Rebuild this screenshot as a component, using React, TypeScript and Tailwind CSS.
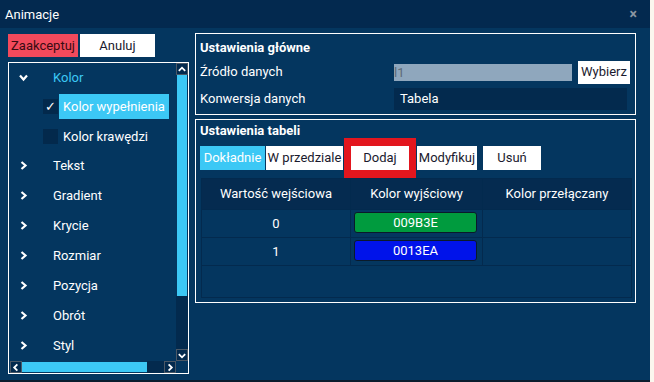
import React from "react";

const ChevronRight = () => (
  <svg width="8" height="9" viewBox="0 0 8 9" className="block">
    <path d="M1.5 1 L5.5 4.5 L1.5 8" stroke="white" strokeWidth="2.2" fill="none" />
  </svg>
);
const ChevronDown = () => (
  <svg width="9" height="8" viewBox="0 0 9 8" className="block">
    <path d="M1 1.5 L4.5 5.5 L8 1.5" stroke="white" strokeWidth="2.2" fill="none" />
  </svg>
);

const ScrollBtn = ({ dir }: { dir: "up" | "down" | "left" | "right" }) => {
  const d =
    dir === "up"
      ? "M2 7 L5.5 3.5 L9 7"
      : dir === "down"
      ? "M2 4 L5.5 7.5 L9 4"
      : dir === "left"
      ? "M7 2 L3.5 5.5 L7 9"
      : "M4 2 L7.5 5.5 L4 9";
  return (
    <div className="w-[12px] h-[12px] border border-[#4b5866] bg-[#032a4e] flex items-center justify-center">
      <svg width="11" height="11" viewBox="0 0 11 11">
        <path d={d} stroke="white" strokeWidth="2" fill="none" />
      </svg>
    </div>
  );
};

const treeItems = ["Tekst", "Gradient", "Krycie", "Rozmiar", "Pozycja", "Obrót", "Styl"];

export default function App() {
  return (
    <div
      className="w-[654px] h-[382px] bg-[#fbf6ee] overflow-hidden"
      style={{ fontFamily: "Roboto, 'Noto Sans', sans-serif" }}
    >
      <div className="w-[650px] h-[382px] bg-[#04365f] flex flex-col border-b-2 border-[#0b1d2e]">
        {/* title bar */}
        <div className="h-[28px] bg-[#03294f] flex items-center justify-between pl-[5px] pr-[13px]">
          <span className="text-white text-[13px] leading-none">Animacje</span>
          <span className="text-[#8a96a2] text-[14px] font-bold leading-none">×</span>
        </div>
        {/* body */}
        <div className="flex pl-[8px] pt-[5px]">
          {/* left column */}
          <div className="w-[181px] flex flex-col">
            <div className="flex gap-[2px] mt-[1px] h-[23px]">
              <div className="w-[70px] bg-[#f24a5c] text-[#3a0c12] text-[13px] flex items-center justify-center">
                Zaakceptuj
              </div>
              <div className="w-[75px] bg-white text-[#1a1a2e] text-[13px] flex items-center justify-center">
                Anuluj
              </div>
            </div>
            <div className="mt-[5px] h-[312px] border border-white flex flex-col">
              <div className="flex flex-1 min-h-0">
                <div className="flex-1 flex flex-col text-white text-[13px]">
                  {/* Kolor */}
                  <div className="h-[30px] flex items-center">
                    <div className="w-[44px] pl-[10px]">
                      <ChevronDown />
                    </div>
                    <span className="text-[#3cc8f5]">Kolor</span>
                  </div>
                  <div className="h-[30px] flex items-center pl-[34px]">
                    <div className="w-[15px] h-[15px] bg-[#03294c] flex items-center justify-center text-[13px] leading-none text-white">
                      ✓
                    </div>
                    <div className="ml-[1px] h-[25px] w-[110px] bg-[#3cc8f5] flex items-center pl-[4px] text-white">
                      Kolor wypełnienia
                    </div>
                  </div>
                  <div className="h-[30px] flex items-center pl-[34px]">
                    <div className="w-[15px] h-[15px] bg-[#03294c]" />
                    <span className="ml-[5px]">Kolor krawędzi</span>
                  </div>
                  {treeItems.map((t) => (
                    <div key={t} className="h-[30px] flex items-center shrink-0">
                      <div className="w-[44px] pl-[11px]">
                        <ChevronRight />
                      </div>
                      <span>{t}</span>
                    </div>
                  ))}
                </div>
                <div className="w-[12px] flex flex-col">
                  <ScrollBtn dir="up" />
                  <div className="h-[221px] bg-[#3cc8f5] mx-[1px]" />
                  <div className="flex-1 bg-[#032a4e]" />
                  <ScrollBtn dir="down" />
                </div>
              </div>
              <div className="h-[12px] flex ml-[1px]">
                <ScrollBtn dir="left" />
                <div className="w-[125px] bg-[#3cc8f5] my-[1px]" />
                <div className="flex-1 bg-[#032a4e]" />
                <ScrollBtn dir="right" />
                <div className="w-[12px]" />
              </div>
            </div>
          </div>
          {/* right column */}
          <div className="ml-[6px] w-[441px] flex flex-col">
            <div className="h-[82px] border border-white px-[4px] text-white text-[13px]">
              <div className="h-[26px] flex items-center font-bold pt-[2px]">Ustawienia główne</div>
              <div className="h-[24px] flex items-center">
                <span className="w-[194px]">Źródło danych</span>
                <div className="w-[178px] h-[17px] bg-[#8fa7bd] text-[#5d6b78] flex items-center pl-[0px] leading-none">
                  l1
                </div>
                <div className="ml-[6px] w-[52px] h-[23px] bg-white text-[#1a1a2e] flex items-center justify-center">
                  Wybierz
                </div>
              </div>
              <div className="h-[27px] flex items-center pt-[3px]">
                <span className="w-[194px]">Konwersja danych</span>
                <div className="w-[233px] h-[22px] bg-[#032a4e] flex items-center pl-[6px]">Tabela</div>
              </div>
            </div>
            <div className="mt-[4px] h-[184px] border border-white px-[4px] text-[13px]">
              <div className="h-[17px] flex items-end text-white font-bold leading-none">Ustawienia tabeli</div>
              <div className="flex items-center h-[41px]">
                <div className="w-[65px] h-[24px] bg-[#3cc8f5] text-white flex items-center justify-center">
                  Dokładnie
                </div>
                <div className="ml-[1px] w-[77px] h-[24px] bg-white text-[#1a1a2e] flex items-center justify-center">
                  W przedziale
                </div>
                <div className="ml-[1px] border-[7px] border-[#e3161e] border-y-[8px]">
                  <div className="w-[58px] h-[24px] bg-white text-[#1a1a2e] flex items-center justify-center">
                    Dodaj
                  </div>
                </div>
                <div className="ml-[1px] w-[60px] h-[24px] bg-white text-[#1a1a2e] flex items-center justify-center">
                  Modyfikuj
                </div>
                <div className="ml-[6px] w-[58px] h-[24px] bg-white text-[#1a1a2e] flex items-center justify-center">
                  Usuń
                </div>
              </div>
              <div className="ml-[1px] w-[431px] h-[120px] border border-[#032a4e] flex flex-col text-white">
                <div className="h-[31px] bg-[#052b50] flex border-b border-[#032a4e]">
                  <div className="w-[149px] border-r border-[#032a4e] flex items-center justify-center">
                    Wartość wejściowa
                  </div>
                  <div className="w-[132px] border-r border-[#032a4e] flex items-center justify-center">
                    Kolor wyjściowy
                  </div>
                  <div className="flex-1 flex items-center justify-center">Kolor przełączany</div>
                </div>
                {[
                  { v: "0", c: "009B3E", bg: "bg-[#009b3e]" },
                  { v: "1", c: "0013EA", bg: "bg-[#0013ea]" },
                ].map((r) => (
                  <div key={r.v} className="h-[28px] flex border-b border-[#032a4e]">
                    <div className="w-[149px] border-r border-[#032a4e] flex items-center justify-center">
                      {r.v}
                    </div>
                    <div className="w-[132px] border-r border-[#032a4e] pt-[2px] pl-[3px]">
                      <div
                        className={`w-[123px] h-[21px] rounded-[3px] border border-[#0a1a2a] ${r.bg} flex items-center justify-center text-[13px]`}
                      >
                        {r.c}
                      </div>
                    </div>
                    <div className="flex-1" />
                  </div>
                ))}
                <div className="flex-1" />
              </div>
            </div>
          </div>
        </div>
      </div>
    </div>
  );
}
